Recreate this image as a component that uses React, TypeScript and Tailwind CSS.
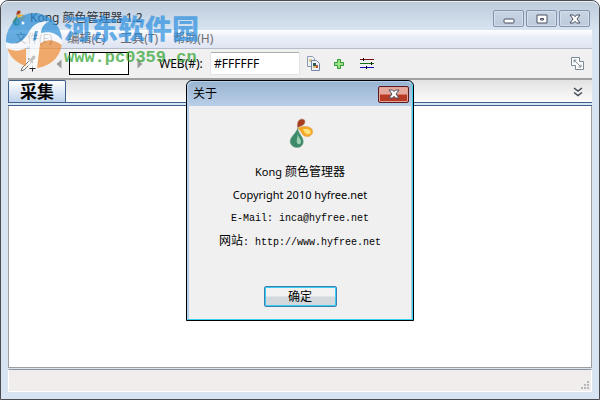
import { ReactNode, useState } from 'react';
import { clsx } from 'clsx';

const MENUS = ['文件(F)', '编辑(E)', '工具(T)', '帮助(H)'];

export default function App() {
  const [aboutOpen, setAboutOpen] = useState(true);
  const [hex, setHex] = useState('#FFFFFF');

  return (
    <div className="relative flex min-h-screen flex-col overflow-hidden rounded-t-lg border border-[#4b4b50] bg-[#d7e4f1] px-[7px] pb-[7px] font-['Noto_Sans','Noto_Sans_CJK_SC',sans-serif] text-xs text-black">
      {/* Title bar */}
      <header className="-mx-[7px] flex h-[29px] items-start justify-between rounded-t-lg border-t border-[#e8eef5] bg-linear-to-b from-[#bdcbdb] to-[#d7e4f1] px-[9px]">
        <div className="flex items-center gap-1 pt-2">
          <DropsIcon className="h-4 w-4" />
          <h1 className="leading-4 text-[#30353b]">Kong 颜色管理器 1.2</h1>
        </div>
        <div className="flex gap-0.5 pt-2">
          <CaptionButton label="Minimize">
            <rect x="4" y="8" width="10" height="4" rx="1" />
          </CaptionButton>
          <CaptionButton label="Maximize">
            <path d="M4 4h10v8H4zM7.500 7.500h3v1.500h-3z" fillRule="evenodd" />
          </CaptionButton>
          <CaptionButton label="Close">
            <CrossPath />
          </CaptionButton>
        </div>
      </header>

      {/* Menu bar */}
      <nav className="flex h-[19px] shrink-0 gap-[15px] border-b border-[#b6bccc] bg-linear-to-b from-white from-0% via-[#eceff8] via-35% to-[#dfe4f3] px-[7px] text-[#6d6d70]">
        {MENUS.map((m) => (
          <button key={m} className="leading-[18px]">{m}</button>
        ))}
      </nav>

      {/* Toolbar */}
      <div className="flex h-[31px] shrink-0 items-center border-b-2 border-[#a0a0a0] bg-[#f0f0f0] pr-2 pl-3">
        <button aria-label="Pick colour"><PickerIcon /></button>
        <button aria-label="Previous" className="ml-[19px]">
          <svg width="6" height="10" viewBox="0 0 6 10"><path d="M5.500 .5v9L.5 5z" fill="#9a9a9a" /></svg>
        </button>
        <button aria-label="Current colour" className="ml-[7px] h-[23px] w-[60px] border border-black bg-white" />
        <button aria-label="Next" className="ml-2">
          <svg width="6" height="10" viewBox="0 0 6 10"><path d="M.5 .5v9l5-4.500z" fill="#9a9a9a" /></svg>
        </button>
        <label htmlFor="hex" className="ml-4 w-[51px]">WEB(#):</label>
        <input
          id="hex"
          value={hex}
          onChange={(e) => setHex(e.target.value)}
          className="h-[23px] w-[90px] rounded-xs border border-[#e2e3ea] border-t-[#abadb3] bg-white px-[3px] outline-none"
        />
        <button aria-label="Copy" className="ml-[7px]"><CopyIcon /></button>
        <button aria-label="Add" className="ml-[13px]">
          <svg width="12" height="12" viewBox="0 0 12 12">
            <path d="M4.500 1.500h3v3h3v3h-3v3h-3v-3h-3v-3h3z" fill="#9be08a" stroke="#2f9a2f" />
          </svg>
        </button>
        <button aria-label="Adjust" className="ml-[15px]">
          <svg width="14" height="12" viewBox="0 0 14 12" shapeRendering="crispEdges">
            <path d="M0 1h14v1H0z" fill="#7b1010" />
            <path d="M0 5h14v1H0z" fill="#107010" />
            <path d="M0 9h14v1H0z" fill="#1010b0" />
            <path d="M3 0h1v3H3zM11 4h1v3h-1zM6 8h1v3H6z" fill="#000" />
          </svg>
        </button>
        <button aria-label="Detach" className="ml-auto">
          <svg width="13" height="13" viewBox="0 0 13 13" fill="none" stroke="#7c8894">
            <path d="M4.500 4.500h8v8h-8z" fill="#fff" />
            <path d="M8.500 4.500v-4h-8v8h4" fill="#fff" />
            <path d="M3 3l7 7M3 5.500V3h2.500M10 7.500V10H7.500" />
          </svg>
        </button>
      </div>

      {/* Tabs */}
      <div className="flex h-[22px] shrink-0 items-start justify-between bg-linear-to-b from-[#e2e2e2] to-[#fcfcfc] pr-[9px]">
        <button className="h-full w-[58px] rounded-t-xs border border-b-0 border-[#3c5f8c] bg-linear-to-b from-white to-[#bfd3ec] text-[17px] leading-5 font-bold">
          采集
        </button>
        <button aria-label="More" className="pt-[7px]">
          <svg width="10" height="10" viewBox="0 0 10 10" fill="none" stroke="#444c54" strokeWidth="1.500">
            <path d="M1 1l4 3 4-3M1 5.500l4 3 4-3" />
          </svg>
        </button>
      </div>
      <div className="h-1 shrink-0 border-y border-[#3c6090] bg-[#dbe6f3]" />

      <main className="grow border border-t-0 border-[#9a9fa3] bg-white" />

      {/* Status bar */}
      <footer className="mt-px flex h-[23px] shrink-0 items-end justify-end border border-white border-t-[#8f9296] bg-[#f0edec] p-px">
        <svg width="9" height="9" viewBox="0 0 9 9" fill="#b4b6bb" shapeRendering="crispEdges">
          <path d="M6 0h2v2H6zM3 3h2v2H3zM6 3h2v2H6zM0 6h2v2H0zM3 6h2v2H3zM6 6h2v2H6z" />
        </svg>
      </footer>

      {aboutOpen && <AboutDialog onClose={() => setAboutOpen(false)} />}
      <SiteMark />
    </div>
  );
}

function AboutDialog({ onClose }: { onClose: () => void }) {
  return (
    <div role="dialog" aria-labelledby="about-title" className="absolute top-[79px] left-1/2 w-[228px] -translate-x-1/2 rounded-t-md border border-black bg-[#b4cbe4]">
      <div className="rounded-t-md border border-[#b4d2f0] border-r-[#38d0f0] border-b-[#38d0f0]">
        <div className="flex h-[24px] items-center justify-between rounded-t-md bg-linear-to-b from-[#9ab4d0] to-[#b9cfe8] pr-[3px] pl-[5px]">
          <h2 id="about-title">关于</h2>
          <button
            aria-label="Close"
            onClick={onClose}
            className="flex h-[17px] w-[31px] items-center justify-center rounded-xs border border-[#5a1a20] bg-linear-to-b from-[#e6a89c] from-45% to-[#b83a24] to-55% shadow-[inset_0_0_0_1px_#e0a498]"
          >
            <CloseGlyph />
          </button>
        </div>
        <div className="mx-px flex flex-col items-center bg-[#f0f0f0] pt-3 pb-3 leading-4">
          <DropsIcon className="h-[30px] w-[30px]" />
          <p className="mt-4 text-[11px] leading-4">Kong <span className="text-xs leading-4">颜色管理器</span></p>
          <p className="mt-[7px] text-[11px] leading-4">Copyright 2010 hyfree.net</p>
          <p className="mt-2 font-['Liberation_Mono','Noto_Sans_CJK_SC',monospace] text-[10px] leading-4">
            E-Mail: <a href="mailto:inca@hyfree.net">inca@hyfree.net</a>
          </p>
          <p className="mt-[7px] font-['Liberation_Mono','Noto_Sans_CJK_SC',monospace] text-[10px] leading-4">
            <span className="text-xs leading-4">网站</span>: <a href="http://www.hyfree.net">http://www.hyfree.net</a>
          </p>
          <button
            onClick={onClose}
            className="mt-[35px] h-[21px] w-[73px] rounded-xs border border-[#3c7fb1] bg-linear-to-b from-[#f2f2f2] from-45% to-[#d2d8dc] to-55% leading-[19px] shadow-[inset_0_0_0_1px_#38ccf0]"
          >
            确定
          </button>
        </div>
      </div>
    </div>
  );
}

function CaptionButton({ label, children }: { label: string; children: ReactNode }) {
  return (
    <button
      aria-label={label}
      className="flex h-[17px] w-[31px] items-center justify-center rounded-xs border border-[#8592ad] bg-linear-to-b from-[#c7d4e3] to-[#bccbdc] shadow-[inset_0_0_0_1px_#d5dfeb]"
    >
      <svg width="18" height="16" viewBox="0 0 18 16" fill="#fff" stroke="#4b4f60">
        {children}
      </svg>
    </button>
  );
}

function CrossPath() {
  return <path d="M4 4h3.500L9 5.700 10.500 4H14l-3 4 3 4h-3.500L9 10.300 7.500 12H4l3-4z" />;
}

function CloseGlyph() {
  return (
    <svg width="18" height="16" viewBox="0 0 18 16" fill="#fff" stroke="#4b4f60">
      <CrossPath />
    </svg>
  );
}

function DropsIcon({ className }: { className?: string }) {
  return (
    <svg className={clsx('shrink-0', className)} viewBox="0 0 32 32">
      <path d="M13.500 11C12 5 14.500 1 18 1c4 0 4.500 4 1.500 6.500C17 9.500 14.500 9 13.500 11z" fill="#a83c1e" stroke="#c9b4aa" strokeWidth=".6" />
      <path d="M13.500 11c5-3 16-3 16 3.500 0 5-6 7-10 4-2-2-3-6-6-7.500z" fill="#f5a623" stroke="#d8a860" strokeWidth=".6" />
      <path d="M19 12c4-1.500 8.500 0 8.500 3s-4 3-6 1c-1-1-1-2-2.500-4z" fill="#ffe27a" />
      <path d="M13.500 11c1 6 6 9 6 14 0 4-3 6.500-6.500 6.500S5.500 29 5.500 25c0-5 6-8 8-14z" fill="#3d8a6a" stroke="#7fa596" strokeWidth=".6" />
      <path d="M13.500 16c0 4 4 6 3.500 10-.3 2-3 2.500-4 1-1.500-3 .8-6 .5-11z" fill="#9bd0b0" />
    </svg>
  );
}

function PickerIcon() {
  return (
    <svg width="17" height="17" viewBox="0 0 17 17">
      <path d="M1 16l1-3 7-7 2 2-7 7z" fill="#f4f4f4" stroke="#777" />
      <path d="M8 4l1-1 1.500 1 2-3c1.500-1.500 4 .5 2.500 2.500l-2.500 2.500 1 1.500-1 1z" fill="#33302e" />
      <path d="M12.500 10.500v6M9.500 13.500h6" stroke="#222" />
    </svg>
  );
}

function CopyIcon() {
  return (
    <svg width="13" height="15" viewBox="0 0 13 15">
      <path d="M.5 .5h5l2 2v8h-7z" fill="#eef1f6" stroke="#8b99b0" />
      <path d="M2 3h3v3H2z" fill="#d8c684" />
      <path d="M4.500 4.500h5l3 3v7h-8z" fill="#eef1f6" stroke="#7386a3" />
      <path d="M6 7h3v3H6z" fill="#2b5c55" />
      <path d="M9 9h2v3H9z" fill="#b5573a" />
      <path d="M6 10h3v2H6z" fill="#d9c070" />
    </svg>
  );
}

// Translucent download-site stamp over the top left corner
function SiteMark() {
  return (
    <div className="pointer-events-none absolute top-[9px] left-1 flex gap-px">
      <svg width="58" height="58" viewBox="0 0 58 58" className="opacity-70">
        <path d="M1 31A28 28 0 0 1 57 31C46 24 36 26 29 33 20 41 10 42 1 35z" fill="#2b8fd8" />
        <path d="M2 37c8 5 14 4 19 1v18C11 53 4 46 2 37z" fill="#f08c32" />
        <path d="M29 35c9-8 21-8 28-2-1 13-11 23-25 25z" fill="#f08c32" />
        <path d="M1 32c10 4 18 0 24-12 4-6 10-9 19-9-5 3-8 7-8 12 9-2 16 0 21 7v5c-9-6-16-6-22-1l-3 24h-9l2-22c-8 5-16 6-24 2z" fill="#fff" />
        <circle cx="18" cy="13" r="1.500" fill="#fff" />
        <path d="M28 31l2-10h3l-2 9z" fill="#2b8fd8" />
      </svg>
      <div className="whitespace-nowrap">
        <p className="text-[27px] leading-[38px] font-black text-[#2b8fe0] opacity-70">河东软件园</p>
        <p className="font-['Liberation_Mono',monospace] text-[17px] leading-5 font-bold text-[#36a536] opacity-75">www.pc0359.cn</p>
      </div>
    </div>
  );
}
